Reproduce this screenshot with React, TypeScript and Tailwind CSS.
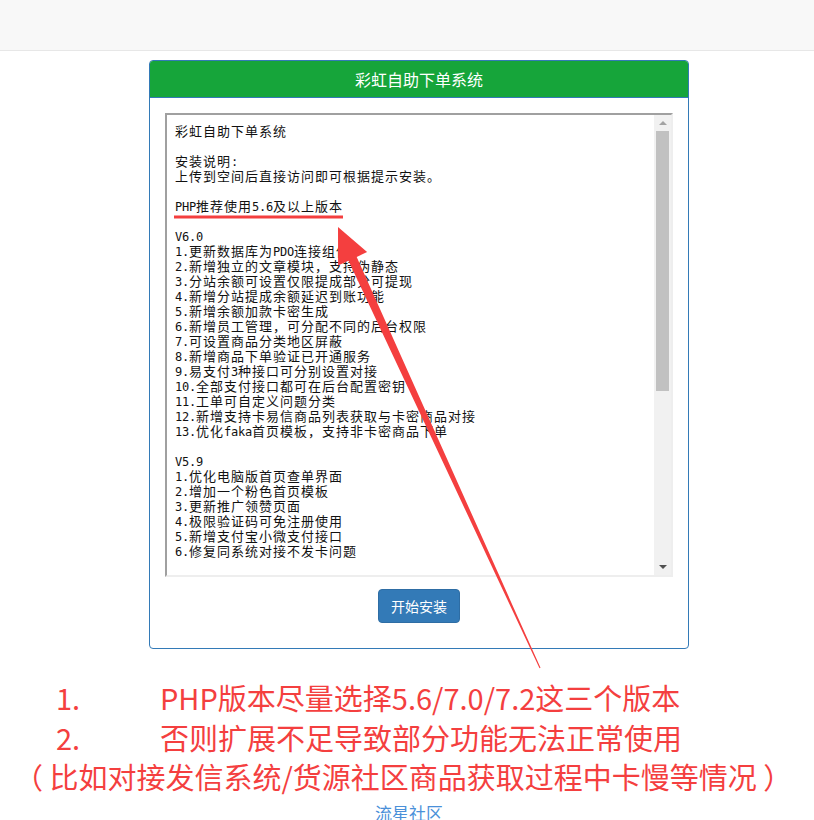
import React from "react";

const lines: string[] = [
  "彩虹自助下单系统",
  "",
  "安装说明:",
  "上传到空间后直接访问即可根据提示安装。",
  "",
  "PHP推荐使用5.6及以上版本",
  "",
  "V6.0",
  "1.更新数据库为PDO连接组件",
  "2.新增独立的文章模块，支持伪静态",
  "3.分站余额可设置仅限提成部分可提现",
  "4.新增分站提成余额延迟到账功能",
  "5.新增余额加款卡密生成",
  "6.新增员工管理，可分配不同的后台权限",
  "7.可设置商品分类地区屏蔽",
  "8.新增商品下单验证已开通服务",
  "9.易支付3种接口可分别设置对接",
  "10.全部支付接口都可在后台配置密钥",
  "11.工单可自定义问题分类",
  "12.新增支持卡易信商品列表获取与卡密商品对接",
  "13.优化faka首页模板，支持非卡密商品下单",
  "",
  "V5.9",
  "1.优化电脑版首页查单界面",
  "2.增加一个粉色首页模板",
  "3.更新推广领赞页面",
  "4.极限验证码可免注册使用",
  "5.新增支付宝小微支付接口",
  "6.修复同系统对接不发卡问题",
];

function splitRuns(s: string): { ascii: boolean; text: string }[] {
  const runs: { ascii: boolean; text: string }[] = [];
  for (const ch of s) {
    const a = ch.charCodeAt(0) < 128;
    const last = runs[runs.length - 1];
    if (last && last.ascii === a) last.text += ch;
    else runs.push({ ascii: a, text: ch });
  }
  return runs;
}

function Line({ text }: { text: string }) {
  if (!text) return <div className="h-[15px]" />;
  return (
    <div className="h-[15px] whitespace-pre leading-[15px]">
      {splitRuns(text).map((r, i) =>
        r.ascii ? (
          <span
            key={i}
            className="inline-block font-['DejaVu_Sans_Mono',monospace] text-[12px] leading-[15px] tracking-[-0.22px]"
          >
            {r.text}
          </span>
        ) : (
          <span
            key={i}
            className="inline-block font-['Noto_Sans_CJK_SC',sans-serif] text-[13px] leading-[15px] tracking-[1px]"
          >
            {r.text}
          </span>
        )
      )}
    </div>
  );
}

export default function App() {
  return (
    <div className="relative min-h-[820px] bg-white font-['Noto_Sans_CJK_SC',sans-serif]">
      <div className="h-[51px] border-b border-[#e7e7e7] bg-[#f8f8f8]" />

      <div className="ml-[149px] mt-[9px] w-[540px] overflow-hidden rounded-[4px] border border-[#337ab7]">
        <div className="flex h-[37px] items-center justify-center border-b border-[#337ab7] bg-[#16a53a] text-[16px] text-white">
          彩虹自助下单系统
        </div>
        <div className="px-[15px] pt-[15px] pb-[25px]">
          <div className="flex h-[464px] border-t-2 border-l-2 border-r-2 border-b-2 border-t-[#a0a0a0] border-l-[#a0a0a0] border-r-[#eeeeee] border-b-[#eeeeee] bg-white">
            <div className="flex-1 overflow-hidden pl-[8px] pt-[7px] text-[#111]">
              {lines.map((l, i) => (
                <Line key={i} text={l} />
              ))}
            </div>
            <div className="relative w-[17px] bg-[#f1f1f1]">
              <div className="absolute left-[5px] top-[6px] h-0 w-0 border-x-[4px] border-b-[4px] border-x-transparent border-b-[#a3a3a3]" />
              <div className="absolute left-[2px] top-[16px] h-[260px] w-[13px] bg-[#c1c1c1]" />
              <div className="absolute bottom-[6px] left-[5px] h-0 w-0 border-x-[4px] border-t-[4px] border-x-transparent border-t-[#505050]" />
            </div>
          </div>
          <div className="mt-[12px] flex justify-center">
            <button className="h-[34px] w-[82px] rounded-[4px] border border-[#2e6da4] bg-[#337ab7] text-[14px] text-white">
              开始安装
            </button>
          </div>
        </div>
      </div>

      <div className="mt-[29px] text-[29px] leading-[39.5px] text-[#f43f3f]">
        <div className="flex">
          <span className="ml-[56px] w-[104px]">1.</span>
          <span>PHP版本尽量选择5.6/7.0/7.2这三个版本</span>
        </div>
        <div className="flex">
          <span className="ml-[56px] w-[104px]">2.</span>
          <span>否则扩展不足导致部分功能无法正常使用</span>
        </div>
        <div className="ml-[14px]">（ 比如对接发信系统/货源社区商品获取过程中卡慢等情况 ）</div>
      </div>

      <div className="mt-[6px] text-center text-[17px] leading-[20px] text-[#4a90d9]">
        <span className="ml-[4px]">流星社区</span>
      </div>

      <svg
        className="pointer-events-none absolute left-0 top-0"
        width="814"
        height="820"
        viewBox="0 0 814 820"
      >
        <rect x="174" y="215.5" width="169" height="3" fill="#f43f3f" />
        <polygon
          points="338,227 367.1,252.1 356.7,256.9 540.5,667.8 539.5,668.2 348.5,260.7 338.1,265.5"
          fill="#f43f3f"
        />
      </svg>
    </div>
  );
}
